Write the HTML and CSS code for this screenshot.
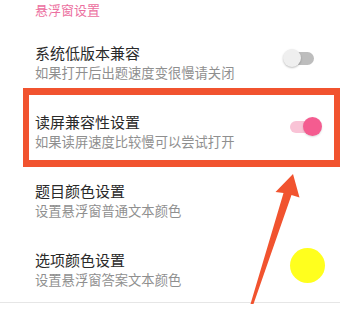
FILE: index.html
```html
<!DOCTYPE html>
<html lang="zh-CN">
<head>
<meta charset="utf-8">
<link rel="stylesheet" href="styles.css">
</head>
<body>
<div class="page">
  <div class="section-title">悬浮窗设置</div>
  <div class="list">
    <div class="row">
      <div class="text">
        <div class="title">系统低版本兼容</div>
        <div class="sub">如果打开后出题速度变很慢请关闭</div>
      </div>
      <div class="widget">
        <div class="switch off"><div class="track"></div><div class="thumb"></div></div>
      </div>
    </div>
    <div class="row">
      <div class="text">
        <div class="title">读屏兼容性设置</div>
        <div class="sub">如果读屏速度比较慢可以尝试打开</div>
      </div>
      <div class="widget">
        <div class="switch on"><div class="track"></div><div class="thumb"></div></div>
      </div>
    </div>
    <div class="row">
      <div class="text">
        <div class="title">题目颜色设置</div>
        <div class="sub">设置悬浮窗普通文本颜色</div>
      </div>
      <div class="widget"></div>
    </div>
    <div class="row">
      <div class="text">
        <div class="title">选项颜色设置</div>
        <div class="sub">设置悬浮窗答案文本颜色</div>
      </div>
      <div class="widget">
        <div class="swatch"></div>
      </div>
    </div>
  </div>
  <div class="divider"></div>

  <div class="highlight"></div>
  <svg class="arrow" width="359" height="316" viewBox="0 0 359 316">
    <polygon points="293,174 299.5,197.5 291.5,195 253.5,304 250.5,304 283.5,193 275.5,192" fill="#f1532f"/>
  </svg>
</div>
</body>
</html>
```

FILE: styles.css
```css
html, body {
  margin: 0;
  padding: 0;
  background: #ffffff;
}

.page {
  position: relative;
  width: 359px;
  height: 316px;
  overflow: hidden;
  font-family: "Noto Sans CJK SC", "Noto Sans", sans-serif;
}

.section-title {
  height: 26px;
  box-sizing: border-box;
  padding: 2px 0 0 35px;
  font-size: 13px;
  line-height: 16px;
  color: #ec6fa0;
}

.list {
  display: flex;
  flex-direction: column;
}

.row {
  height: 69px;
  display: flex;
  align-items: center;
  justify-content: space-between;
  padding: 0 33px 0 35px;
}

.text {
  display: flex;
  flex-direction: column;
  gap: 6px;
  padding-top: 4px;
}

.title {
  font-size: 15px;
  line-height: 15px;
  color: #2a2a2a;
}

.sub {
  font-size: 13.3px;
  line-height: 14px;
  color: #8f8f8f;
}

.widget {
  width: 44px;
  display: flex;
  justify-content: flex-end;
  margin-bottom: 5px;
}

.switch {
  position: relative;
  width: 40px;
  height: 20px;
  margin-right: 4px;
  display: flex;
  align-items: center;
}

.track {
  margin-left: 8px;
  width: 24px;
  height: 13px;
  border-radius: 7px;
}

.switch.off .track { background: #bdbdbd; }
.switch.on .track { background: #f9c3d6; height: 12px; }

.thumb {
  position: absolute;
  top: 1px;
  width: 18px;
  height: 18px;
  border-radius: 50%;
}

.switch.off .thumb {
  left: 1px;
  background: #efefef;
  box-shadow: 0 1px 2px rgba(0,0,0,0.25);
}

.switch.on .thumb {
  right: 0;
  top: 0;
  width: 19px;
  height: 19px;
  background: #f45c90;
  box-shadow: 0 1px 2px rgba(0,0,0,0.15);
}

.swatch {
  width: 35px;
  height: 35px;
  border-radius: 50%;
  background: #ffff1e;
  margin-right: 1px;
}

.divider {
  width: 340px;
  height: 1px;
  background: #e6e6e6;
}

.highlight {
  position: absolute;
  left: 23px;
  top: 88px;
  width: 317px;
  height: 79px;
  box-sizing: border-box;
  border: 7px solid #f1532f;
  border-left-width: 6px;
  border-right-width: 6px;
}

.arrow {
  position: absolute;
  left: 0;
  top: 0;
}
```
